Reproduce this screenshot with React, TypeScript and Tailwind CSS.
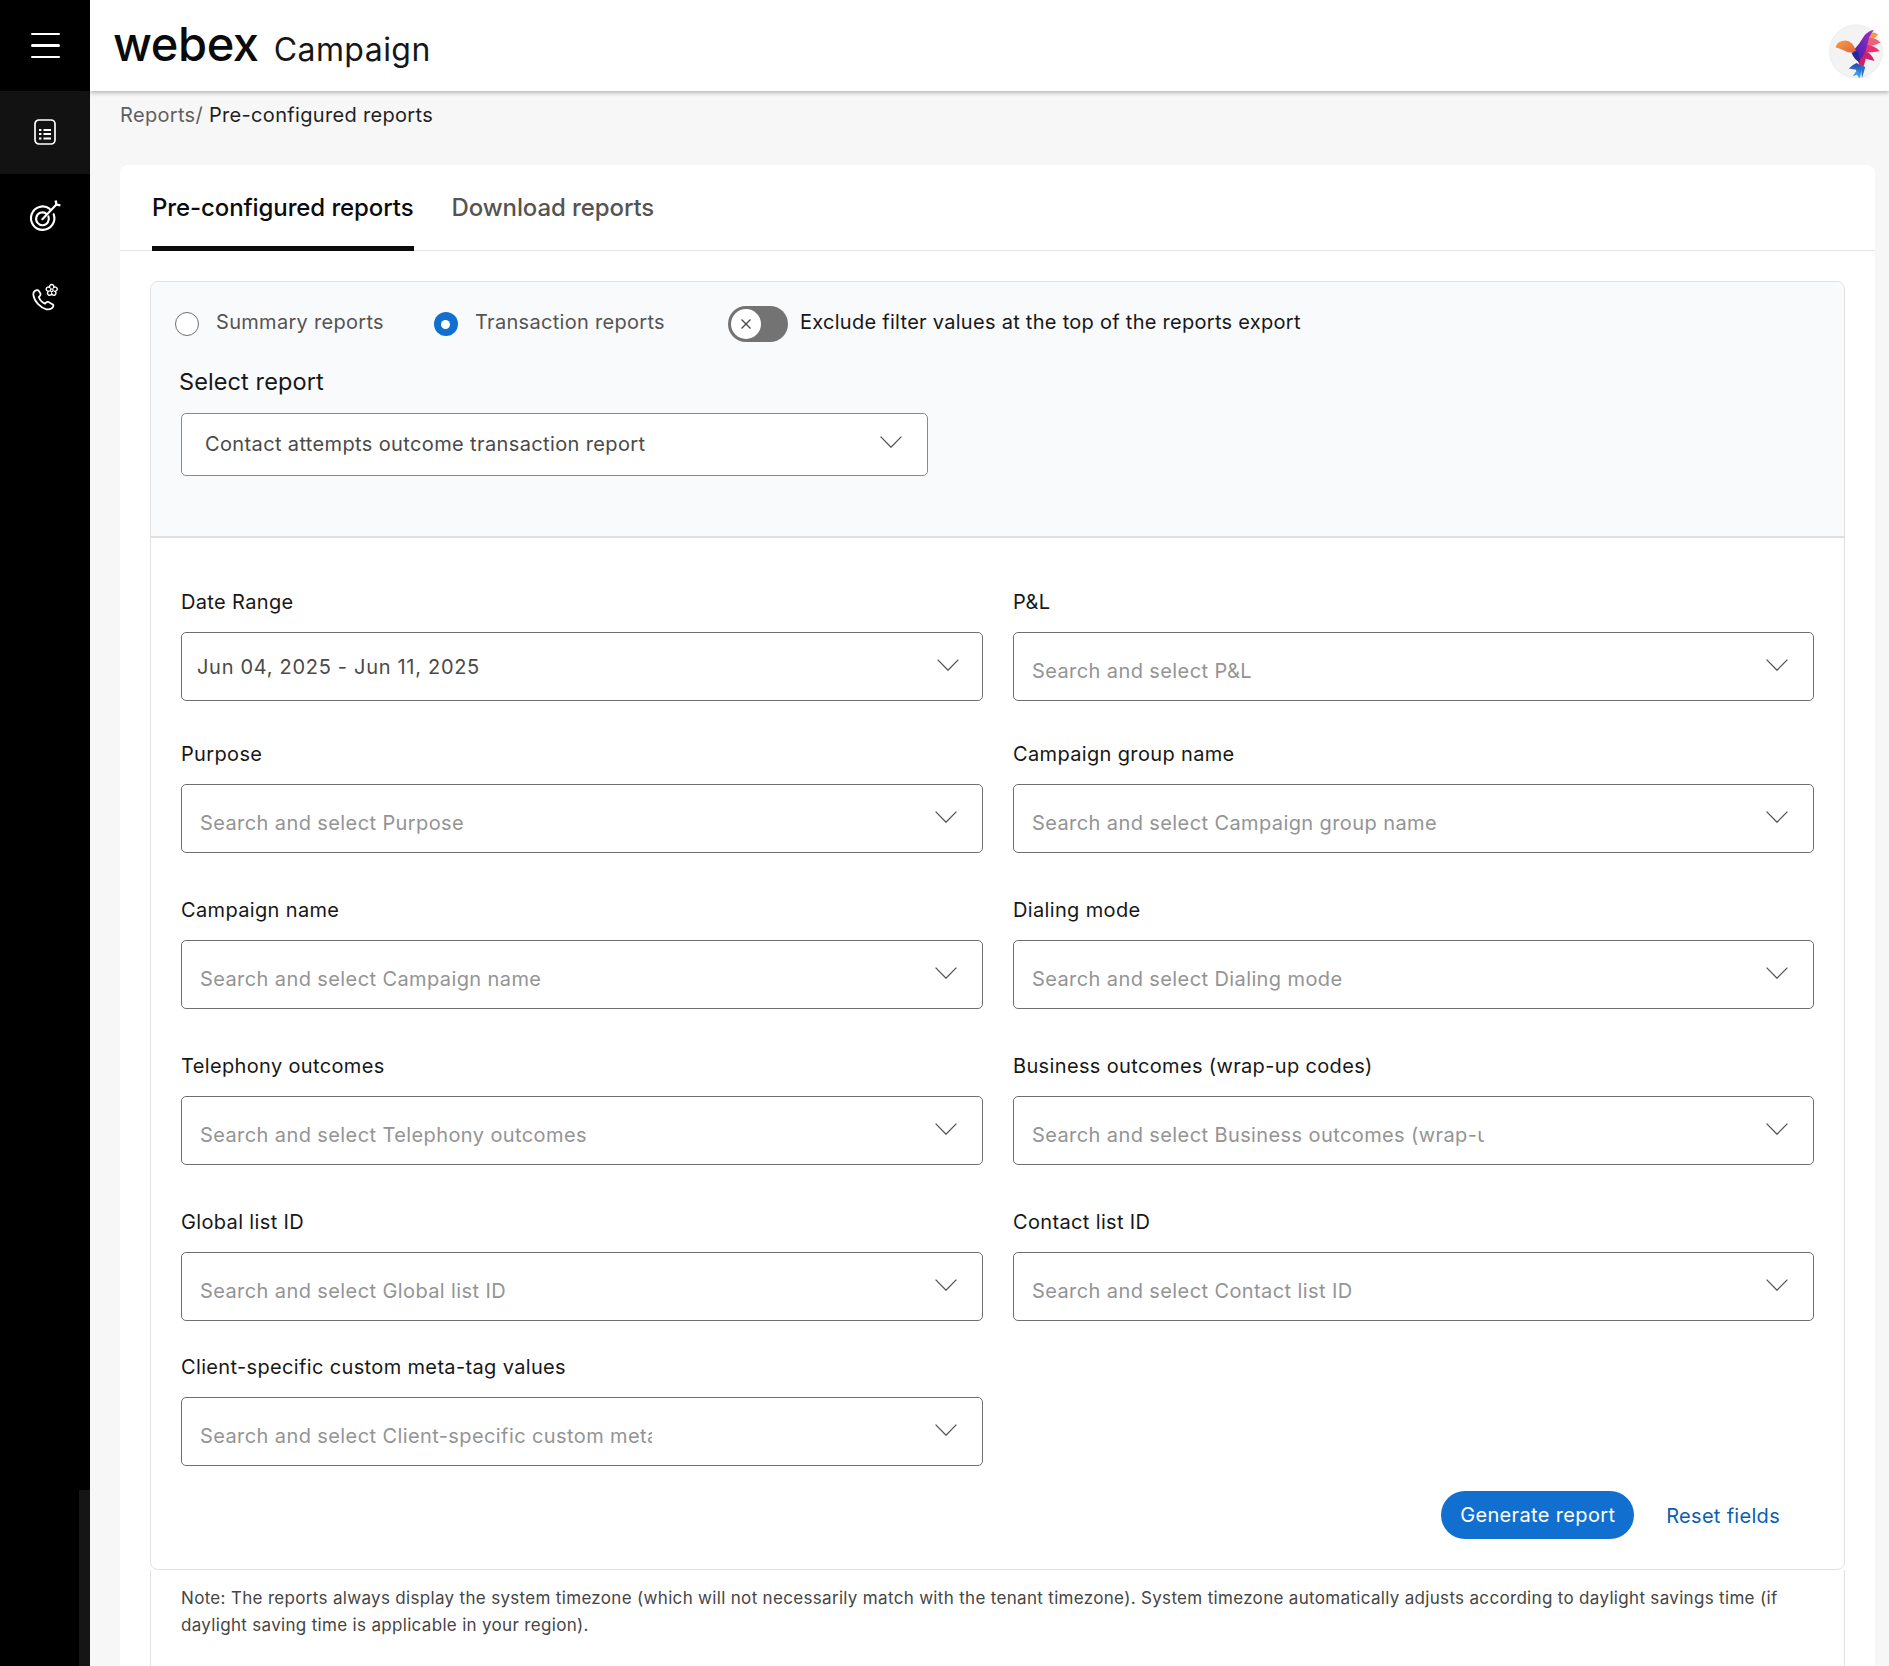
type FieldProps = {
  label: string
  placeholder?: string
  value?: string
}

const Chevron = ({ className }: { className?: string }) => (
  <svg className={className} width="22" height="12" viewBox="0 0 22 12" fill="none">
    <path d="M0.6 0.6 11 11.2 21.4 0.6" stroke="#545454" strokeWidth="1.3" />
  </svg>
)

const Field = ({ label, placeholder, value }: FieldProps) => (
  <div>
    <div className="flex h-[30px] items-center text-[20px] tracking-[0.35px] text-[#171717]">{label}</div>
    <div className="mt-[15px] flex h-[69px] items-center justify-between rounded-[5px] border border-[#6f6f6f] bg-white pr-[25px]">
      {value ? (
        <span className="pl-[15px] text-[20px] tracking-[0.7px] text-[#4a4a4a]">{value}</span>
      ) : (
        <input
          readOnly
          placeholder={placeholder}
          className="mt-[8px] w-[470px] bg-transparent pl-[18px] pr-0 text-[20px] tracking-[0.4px] outline-none placeholder:text-[#949494]"
        />
      )}
      <Chevron className={value ? "-mt-[3px] -mr-[2px]" : "-mt-[3px]"} />
    </div>
  </div>
)

const Bird = () => (
  <svg className="h-[55px] w-[54px]" viewBox="13 12 162 166">
    <defs>
      <linearGradient id="head" x1="0" y1="0" x2="1" y2="1">
        <stop offset="0" stopColor="#f7a33f" />
        <stop offset="1" stopColor="#e2603f" />
      </linearGradient>
      <linearGradient id="wing" x1="0" y1="1" x2="1" y2="0">
        <stop offset="0" stopColor="#3d1fa8" />
        <stop offset="1" stopColor="#a62cc8" />
      </linearGradient>
      <linearGradient id="tail" x1="0" y1="0" x2="0" y2="1">
        <stop offset="0" stopColor="#2b3fb4" />
        <stop offset="1" stopColor="#35b4e6" />
      </linearGradient>
    </defs>
    <circle cx="94" cy="95" r="80" fill="#f4f3f3" stroke="#e6e6e6" strokeWidth="2" />
    <path d="M132 42 Q150 32 160 44 Q154 56 136 62Z" fill="#f29a45" />
    <path d="M124 56 Q150 50 168 68 Q150 78 124 80Z" fill="#ef5f7c" />
    <path d="M120 74 Q150 76 166 94 Q145 98 118 98Z" fill="#e7336f" />
    <path d="M114 90 Q140 98 150 124 Q128 120 108 110Z" fill="#cf1f6f" />
    <path d="M98 100 Q112 92 124 98 Q126 124 112 148 Q98 134 98 100Z" fill="#d4205f" />
    <path d="M84 94 Q104 74 120 46 Q132 32 148 30 Q132 48 128 76 Q122 106 104 122 Q90 112 84 94Z" fill="url(#wing)" />
    <path d="M80 98 L100 96 L106 128 Q90 122 80 98Z" fill="#26269a" />
    <path d="M32 82 Q38 62 62 62 Q84 64 94 92 Q78 104 58 92 Q46 86 32 82Z" fill="url(#head)" />
    <path d="M96 130 L112 140 L106 176 Q96 170 94 150 L72 146 Q82 136 96 130Z" fill="url(#tail)" />
    <path d="M108 134 L122 142 L112 176 Z" fill="#2a6fd0" />
    <path d="M98 150 L84 170 L104 162Z" fill="#2f9fe0" />
  </svg>
)

const Sidebar = () => (
  <aside className="relative flex w-[90px] shrink-0 flex-col bg-black">
    <button className="flex h-[91px] flex-col items-center justify-center gap-[9px]">
      <span className="h-[2.5px] w-[29px] rounded-full bg-white" />
      <span className="h-[2.5px] w-[29px] rounded-full bg-white" />
      <span className="h-[2.5px] w-[29px] rounded-full bg-white" />
    </button>
    <div className="flex h-[83px] items-center justify-center bg-[#121212]">
      <svg className="-mt-[1px]" width="22" height="26" viewBox="0 0 22 26" fill="none" stroke="white">
        <rect x="1" y="1" width="20" height="24" rx="4" strokeWidth="1.7" />
        <path d="M5 11h2.4M5 15h2.4M5 19.5h2.4M9.5 11H17M9.5 15H17M9.5 19.5H17" strokeWidth="1.8" />
      </svg>
    </div>
    <div className="flex h-[84px] items-center justify-center">
      <svg className="-ml-[1px]" width="34" height="34" viewBox="0 0 32 32" fill="none" stroke="white" strokeWidth="2">
        <path d="M20.5 9.3A11 11 0 1 0 24.2 14.4" strokeLinecap="round" />
        <path d="M17 13.7A6 6 0 1 0 19.2 16.4" strokeLinecap="round" />
        <path d="M13.5 19 26.5 5.5" strokeLinecap="round" />
        <path d="M26 1.5 26.8 5.2 30.5 6" strokeWidth="2.2" />
      </svg>
    </div>
    <div className="flex h-[83px] items-center justify-center">
      <svg className="-ml-[1px]" width="33" height="33" viewBox="0 0 32 32" fill="none" stroke="white">
        <path
          d="M8.5 7C6.5 7.5 5 9 5.2 11.5 5.8 17.5 12 24 18 25.5 21 26 23.5 25 24.5 22.5 25 21.5 24.5 21 23.5 20.5L20 18.5C19 18 18.2 18.3 17.5 19L16.5 20C13.5 18.7 11.5 16.5 10.5 13.5L11.7 12.3C12.3 11.6 12.4 11 12 10L10.5 7.7C10 6.9 9.3 6.8 8.5 7Z"
          strokeWidth="1.7"
        />
        <path
          d="M21 4.25A2.1 2.1 0 1 1 25 4.25 2.1 2.1 0 1 1 26.2 8.05 2.1 2.1 0 1 1 23 10.4 2.1 2.1 0 1 1 19.8 8.05 2.1 2.1 0 1 1 21 4.25Z"
          strokeWidth="1.4"
        />
        <circle cx="23" cy="7" r="1.3" strokeWidth="1.1" />
      </svg>
    </div>
    <div className="absolute right-0 bottom-0 h-[176px] w-[11px] bg-[#151515]" />
  </aside>
)

const Radio = ({ label, checked }: { label: string; checked?: boolean }) => (
  <label className="flex items-center gap-[17px]">
    {checked ? (
      <span className="flex size-[24px] items-center justify-center rounded-full bg-[#1170cf]">
        <span className="size-[9px] rounded-full bg-white" />
      </span>
    ) : (
      <span className="size-[24px] rounded-full border border-[#6f6f6f] bg-white" />
    )}
    <span className="-mt-[5px] text-[20px] tracking-[0.3px] text-[#545454]">{label}</span>
  </label>
)

const App = () => {
  return (
    <div className="flex h-[1666px] overflow-hidden bg-[#f7f7f7] font-[family-name:Inter,sans-serif]">
      <Sidebar />
      <main className="flex min-w-0 flex-1 flex-col">
        <header className="relative z-10 flex h-[91px] items-start justify-between bg-white pl-[24px] pr-[6px] shadow-[0_2px_4px_rgba(0,0,0,0.25)]">
          <div className="flex items-baseline gap-[15px] pt-[16px]">
            <span className="-ml-[1px] text-[47px] leading-[56px] font-medium tracking-[-0.4px] text-[#0a0a0a]">webex</span>
            <span className="text-[32px] tracking-[0.45px] text-[#171717]">Campaign</span>
          </div>
          <div className="mt-[24px]">
            <Bird />
          </div>
        </header>

        <nav className="mt-[9px] ml-[30px] flex h-[30px] items-center gap-[6px] text-[20px] tracking-[0.32px]">
          <span className="text-[#5f5f5f]">Reports/</span>
          <span className="text-[#1f1f1f]">Pre-configured reports</span>
        </nav>

        <section className="mt-[35px] mr-[14px] ml-[30px] flex flex-1 flex-col rounded-t-[8px] bg-white">
          <div className="flex h-[86px] gap-[38px] border-b border-[#e4e4e4] pl-[32px]">
            <button className="flex h-[86px] items-center border-b-[5px] border-[#0c0c0c] pt-[5px] text-[24px] font-medium tracking-[-0.1px] text-[#0c0c0c]">
              Pre-configured reports
            </button>
            <button className="flex h-[85px] items-center text-[24px] font-medium tracking-[-0.1px] text-[#545454]">
              Download reports
            </button>
          </div>

          <div className="mt-[30px] flex flex-1 flex-col px-[30px]">
            <div className="rounded-[8px] border border-[#e2e2e2]">
              <div className="h-[256px] rounded-t-[8px] border-b-2 border-[#e0e0e0] bg-[#f9fafc] pl-[24px]">
                <div className="flex items-center pt-[24px]">
                  <Radio label="Summary reports" />
                  <div className="ml-[50px]">
                    <Radio label="Transaction reports" checked />
                  </div>
                  <div className="ml-[63px] flex items-center gap-[12px]">
                    <span className="flex h-[36px] w-[60px] items-center rounded-full bg-[#737373] pl-[3px]">
                      <span className="flex size-[30px] items-center justify-center rounded-full bg-white">
                        <svg width="12" height="12" viewBox="0 0 12 12" stroke="#454545" strokeWidth="1.3">
                          <path d="M1.5 1.5 10.5 10.5M10.5 1.5 1.5 10.5" />
                        </svg>
                      </span>
                    </span>
                    <span className="-mt-[5px] text-[20px] tracking-[0.28px] text-[#171717]">
                      Exclude filter values at the top of the reports export
                    </span>
                  </div>
                </div>
                <div className="mt-[23px] ml-[4px] text-[23.5px] leading-[34px] tracking-[0.1px] text-[#171717]">
                  Select report
                </div>
                <div className="mt-[14px] ml-[6px] flex h-[63px] w-[747px] items-center justify-between rounded-[5px] border border-[#8a8a8a] bg-white pr-[25px] pl-[23px]">
                  <span className="-mt-[2px] text-[20px] tracking-[0.37px] text-[#4a4a4a]">
                    Contact attempts outcome transaction report
                  </span>
                  <Chevron className="-mt-[5px]" />
                </div>
              </div>

              <div className="grid grid-cols-[802px_801px] grid-rows-[152px_156px_156px_156px_145px_auto] gap-x-[30px] pt-[49px] pl-[30px]">
                <Field label="Date Range" value="Jun 04, 2025 - Jun 11, 2025" />
                <Field label="P&L" placeholder="Search and select P&L" />
                <Field label="Purpose" placeholder="Search and select Purpose" />
                <Field label="Campaign group name" placeholder="Search and select Campaign group name" />
                <Field label="Campaign name" placeholder="Search and select Campaign name" />
                <Field label="Dialing mode" placeholder="Search and select Dialing mode" />
                <Field label="Telephony outcomes" placeholder="Search and select Telephony outcomes" />
                <Field label="Business outcomes (wrap-up codes)" placeholder="Search and select Business outcomes (wrap-up codes)" />
                <Field label="Global list ID" placeholder="Search and select Global list ID" />
                <Field label="Contact list ID" placeholder="Search and select Contact list ID" />
                <Field label="Client-specific custom meta-tag values" placeholder="Search and select Client-specific custom meta-tag values" />
              </div>

              <div className="flex h-[103px] items-start justify-end gap-[32px] pt-[25px] pr-[64px]">
                <button className="h-[48px] w-[193px] rounded-full bg-[#1170cf] text-[20px] tracking-[0.35px] text-white">
                  Generate report
                </button>
                <button className="mt-[10px] text-[20px] tracking-[0.3px] text-[#0a5fb4]">Reset fields</button>
              </div>
            </div>

            <div className="flex-1 border-x border-[#e2e2e2] pt-[15px] pr-[30px] pl-[30px] text-[17px] leading-[27px] tracking-[0.32px] text-[#454545]">
              Note: The reports always display the system timezone (which will not necessarily match with the tenant
              timezone). System timezone automatically adjusts according to daylight savings time (if daylight saving
              time is applicable in your region).
            </div>
          </div>
        </section>
      </main>
    </div>
  )
}

export default App
